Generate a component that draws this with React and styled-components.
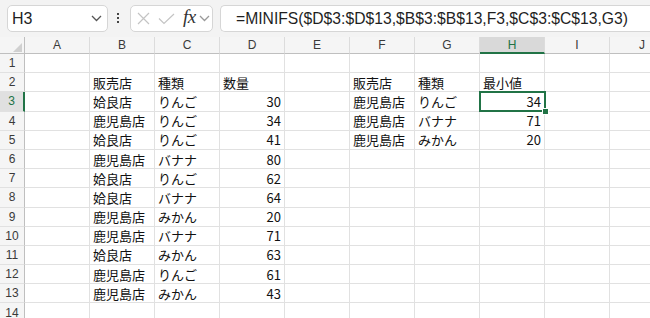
import React from "react";
import styled, { createGlobalStyle, css } from "styled-components";

const GREEN = "#217346";

const GlobalStyle = createGlobalStyle`
  html, body {
    margin: 0;
    padding: 0;
    background: #ffffff;
    overflow: hidden;
  }
  body {
    font-family: "Liberation Sans", Arial, sans-serif;
  }
`;

const COLS = ["A", "B", "C", "D", "E", "F", "G", "H", "I", "J"];

const DATA = {
  2: { B: "販売店", C: "種類", D: "数量", F: "販売店", G: "種類", H: "最小値" },
  3: { B: "姶良店", C: "りんご", D: 30, F: "鹿児島店", G: "りんご", H: 34 },
  4: { B: "鹿児島店", C: "りんご", D: 34, F: "鹿児島店", G: "バナナ", H: 71 },
  5: { B: "姶良店", C: "りんご", D: 41, F: "鹿児島店", G: "みかん", H: 20 },
  6: { B: "鹿児島店", C: "バナナ", D: 80 },
  7: { B: "姶良店", C: "りんご", D: 62 },
  8: { B: "姶良店", C: "バナナ", D: 64 },
  9: { B: "鹿児島店", C: "みかん", D: 20 },
  10: { B: "鹿児島店", C: "バナナ", D: 71 },
  11: { B: "姶良店", C: "みかん", D: 63 },
  12: { B: "鹿児島店", C: "りんご", D: 61 },
  13: { B: "鹿児島店", C: "みかん", D: 43 },
};

const ACTIVE = { col: "H", row: 3 };
const ROW_COUNT = 14;

const Page = styled.div`
  width: 650px;
  height: 318px;
  background: #f3f3f3;
  overflow: hidden;
`;

const Toolbar = styled.div`
  display: flex;
  align-items: flex-start;
  height: 37px;
  padding: 5px 0 0 7px;
  box-sizing: border-box;
`;

const Box = styled.div`
  display: flex;
  align-items: center;
  height: 27px;
  box-sizing: border-box;
  background: #ffffff;
  border: 1px solid #d6d6d6;
  border-radius: 5px;
`;

const NameBox = styled(Box)`
  width: 101px;
  padding: 0 5px 0 4px;
  justify-content: space-between;
  font-size: 16px;
  color: #1f1f1f;
`;

const Dots = styled.div`
  display: flex;
  flex-direction: column;
  gap: 2px;
  margin: 8px 11px 0 9px;
  span {
    width: 2px;
    height: 2px;
    background: #444;
  }
`;

const FuncBox = styled(Box)`
  width: 83px;
  padding: 0 2px 0 6px;
`;

const Fx = styled.span`
  font-family: "Liberation Serif", "Times New Roman", serif;
  font-style: italic;
  font-size: 19px;
  color: #333;
  margin: 0 3px 3px 8px;
  letter-spacing: -0.5px;
`;

const FormulaBox = styled(Box)`
  flex: 1;
  margin-left: 7px;
  padding-left: 15px;
  border-right: none;
  border-radius: 5px 0 0 5px;
  font-size: 15.7px;
  color: #1f1f1f;
  white-space: nowrap;
`;

const Sheet = styled.div`
  display: grid;
  grid-template-columns: 25px repeat(10, 65px);
  grid-template-rows: 17px;
  grid-auto-rows: 19.2px;
  background: #ffffff;
`;

const ColHead = styled.div`
  display: flex;
  align-items: center;
  justify-content: center;
  box-sizing: border-box;
  background: #f5f5f5;
  border-right: 1px solid #dcdcdc;
  border-bottom: 1px solid #bfbfbf;
  font-size: 12px;
  color: #3a3a3a;
  ${(p) =>
    p.$active &&
    css`
      background: #d9d9d9;
      color: ${GREEN};
      border-bottom: 2px solid ${GREEN};
    `}
`;

const Corner = styled(ColHead)`
  position: relative;
  border-right: 1px solid #bfbfbf;
  svg {
    position: absolute;
    right: 2px;
    bottom: 1px;
  }
`;

const RowHead = styled.div`
  display: flex;
  align-items: center;
  justify-content: center;
  box-sizing: border-box;
  background: #f5f5f5;
  border-right: 1px solid #bfbfbf;
  border-bottom: 1px solid #e1e1e1;
  font-size: 12px;
  color: #3a3a3a;
  ${(p) =>
    p.$active &&
    css`
      background: #e0e0e0;
      color: ${GREEN};
      border-right: 2px solid ${GREEN};
    `}
`;

const Cell = styled.div`
  position: relative;
  display: flex;
  align-items: center;
  justify-content: ${(p) => (p.$num ? "flex-end" : "flex-start")};
  box-sizing: border-box;
  padding: 0 3px;
  border-right: 1px solid #e1e1e1;
  border-bottom: 1px solid #e1e1e1;
  font-family: "Noto Sans CJK JP", "Liberation Sans", sans-serif;
  font-size: 13px;
  color: #111;
  white-space: nowrap;
  ${(p) =>
    p.$active &&
    css`
      &::after {
        content: "";
        position: absolute;
        left: -1px;
        top: -1px;
        right: -2px;
        bottom: -1px;
        border: 2px solid ${GREEN};
      }
      &::before {
        content: "";
        position: absolute;
        right: -5px;
        bottom: -4px;
        width: 5px;
        height: 5px;
        background: ${GREEN};
        border: 1px solid #fff;
        z-index: 2;
      }
    `}
`;

const Chevron = ({ color = "#555" }) => (
  <svg width="11" height="7" viewBox="0 0 11 7">
    <polyline points="1,1 5.5,5.5 10,1" fill="none" stroke={color} strokeWidth="1.3" />
  </svg>
);

const Cross = () => (
  <svg width="13" height="13" viewBox="0 0 13 13">
    <path d="M1 1 L12 12 M12 1 L1 12" stroke="#c4c4c4" strokeWidth="1.2" fill="none" />
  </svg>
);

const Check = () => (
  <svg width="17" height="12" viewBox="0 0 17 12" style={{ marginLeft: 8 }}>
    <polyline points="1,5.5 6,10.5 16,1" stroke="#c4c4c4" strokeWidth="1.2" fill="none" />
  </svg>
);

const FORMULA = "=MINIFS($D$3:$D$13,$B$3:$B$13,F3,$C$3:$C$13,G3)";

export default function App() {
  const rows = Array.from({ length: ROW_COUNT }, (_, i) => i + 1);
  return (
    <Page>
      <GlobalStyle />
      <Toolbar>
        <NameBox>
          <span>H3</span>
          <Chevron />
        </NameBox>
        <Dots>
          <span />
          <span />
          <span />
        </Dots>
        <FuncBox>
          <Cross />
          <Check />
          <Fx>fx</Fx>
          <Chevron color="#999" />
        </FuncBox>
        <FormulaBox>{FORMULA}</FormulaBox>
      </Toolbar>
      <Sheet>
        <Corner>
          <svg width="9" height="9" viewBox="0 0 9 9">
            <polygon points="9,0 9,9 0,9" fill="#d0d0d0" />
          </svg>
        </Corner>
        {COLS.map((c) => (
          <ColHead key={c} $active={c === ACTIVE.col}>
            {c}
          </ColHead>
        ))}
        {rows.map((r) => (
          <React.Fragment key={r}>
            <RowHead $active={r === ACTIVE.row}>{r}</RowHead>
            {COLS.map((c) => {
              const v = DATA[r]?.[c];
              return (
                <Cell
                  key={c}
                  $num={typeof v === "number"}
                  $active={r === ACTIVE.row && c === ACTIVE.col}
                >
                  {v}
                </Cell>
              );
            })}
          </React.Fragment>
        ))}
      </Sheet>
    </Page>
  );
}
